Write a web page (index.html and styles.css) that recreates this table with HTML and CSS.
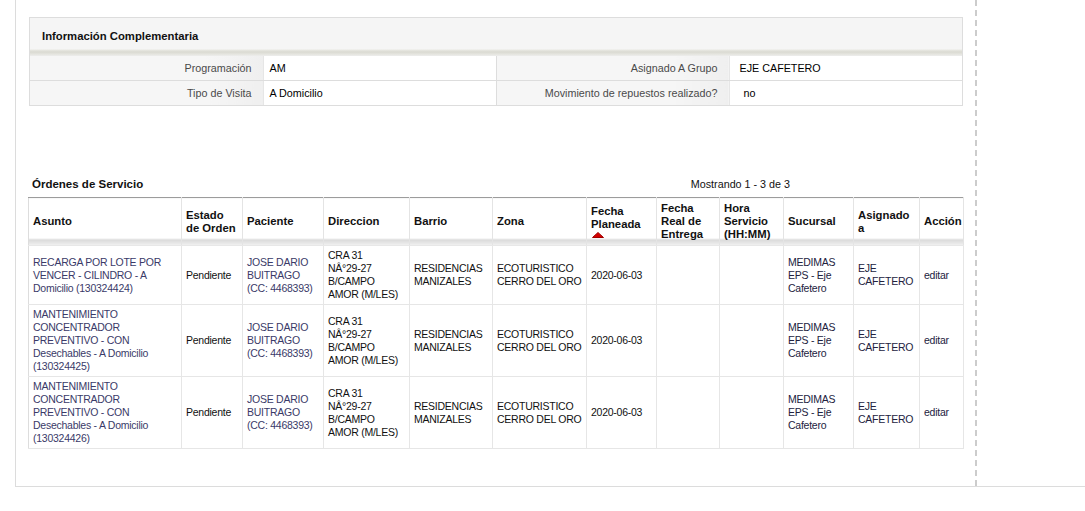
FILE: index.html
```html
<!DOCTYPE html>
<html lang="es">
<head>
<meta charset="utf-8">
<title>Información Complementaria</title>
<link rel="stylesheet" href="styles.css">
</head>
<body>
<div class="page">
  <div class="main">
    <div class="panel">
      <div class="panel-head">Información Complementaria</div>
      <table class="info">
        <colgroup><col><col><col><col></colgroup>
        <tr>
          <td class="lbl">Programación</td>
          <td class="val">AM</td>
          <td class="lbl">Asignado A Grupo</td>
          <td class="val v2">EJE CAFETERO</td>
        </tr>
        <tr>
          <td class="lbl">Tipo de Visita</td>
          <td class="val">A Domicilio</td>
          <td class="lbl">Movimiento de repuestos realizado?</td>
          <td class="val v2 v3">no</td>
        </tr>
      </table>
    </div>

    <div class="orders">
      <div class="orders-head">
        <span class="orders-title">Órdenes de Servicio</span>
        <span class="count">Mostrando 1 - 3 de 3</span>
      </div>
      <table class="grid">
        <colgroup>
          <col class="c-asunto"><col class="c-estado"><col class="c-paciente"><col class="c-dir">
          <col class="c-barrio"><col class="c-zona"><col class="c-fp"><col class="c-fr">
          <col class="c-hora"><col class="c-suc"><col class="c-asig"><col class="c-acc">
        </colgroup>
        <thead>
          <tr>
            <th>Asunto</th>
            <th>Estado de Orden</th>
            <th>Paciente</th>
            <th>Direccion</th>
            <th>Barrio</th>
            <th>Zona</th>
            <th class="sorted">Fecha Planeada<svg class="sort-arrow" width="12" height="6" viewBox="0 0 12 6"><polygon points="0.5,5.5 6,0.5 11.5,5.5" fill="#d40000" stroke="#a00000" stroke-width="1"/></svg></th>
            <th>Fecha Real de Entrega</th>
            <th>Hora Servicio (HH:MM)</th>
            <th>Sucursal</th>
            <th>Asignado a</th>
            <th>Acción</th>
          </tr>
        </thead>
        <tbody>
          <tr>
            <td class="lnk">RECARGA POR LOTE POR VENCER - CILINDRO - A Domicilio (130324424)</td>
            <td>Pendiente</td>
            <td class="lnk">JOSE DARIO BUITRAGO (CC: 4468393)</td>
            <td>CRA 31 <span class="nw">NÂ°29-27</span> B/CAMPO AMOR (M/LES)</td>
            <td>RESIDENCIAS MANIZALES</td>
            <td>ECOTURISTICO CERRO DEL ORO</td>
            <td>2020-06-03</td>
            <td></td>
            <td></td>
            <td class="dk">MEDIMAS EPS - Eje Cafetero</td>
            <td class="dk">EJE CAFETERO</td>
            <td class="dk">editar</td>
          </tr>
          <tr>
            <td class="lnk">MANTENIMIENTO CONCENTRADOR PREVENTIVO - CON Desechables - A Domicilio (130324425)</td>
            <td>Pendiente</td>
            <td class="lnk">JOSE DARIO BUITRAGO (CC: 4468393)</td>
            <td>CRA 31 <span class="nw">NÂ°29-27</span> B/CAMPO AMOR (M/LES)</td>
            <td>RESIDENCIAS MANIZALES</td>
            <td>ECOTURISTICO CERRO DEL ORO</td>
            <td>2020-06-03</td>
            <td></td>
            <td></td>
            <td class="dk">MEDIMAS EPS - Eje Cafetero</td>
            <td class="dk">EJE CAFETERO</td>
            <td class="dk">editar</td>
          </tr>
          <tr>
            <td class="lnk">MANTENIMIENTO CONCENTRADOR PREVENTIVO - CON Desechables - A Domicilio (130324426)</td>
            <td>Pendiente</td>
            <td class="lnk">JOSE DARIO BUITRAGO (CC: 4468393)</td>
            <td>CRA 31 <span class="nw">NÂ°29-27</span> B/CAMPO AMOR (M/LES)</td>
            <td>RESIDENCIAS MANIZALES</td>
            <td>ECOTURISTICO CERRO DEL ORO</td>
            <td>2020-06-03</td>
            <td></td>
            <td></td>
            <td class="dk">MEDIMAS EPS - Eje Cafetero</td>
            <td class="dk">EJE CAFETERO</td>
            <td class="dk">editar</td>
          </tr>
        </tbody>
      </table>
    </div>
  </div>
</div>
</body>
</html>
```

FILE: styles.css
```css
html, body {
  margin: 0;
  padding: 0;
  background: #fff;
}

body {
  font-family: "Liberation Sans", Arial, sans-serif;
  font-size: 10.75px;
  color: #000;
}

.page {
  display: flex;
  margin-left: 15px;
  height: 486px;
  border-left: 1px solid #dcdcdc;
  border-bottom: 1px solid #dcdcdc;
}

.main {
  box-sizing: border-box;
  width: 961px;
  height: 100%;
  padding: 17px 0 0 12px;
  border-right: 2px dashed #cccccc;
}

/* ---------- Información Complementaria ---------- */
.panel {
  box-sizing: border-box;
  width: 934px;
  margin-left: 1px;
  border: 1px solid #dddddd;
}

.panel-head {
  height: 38px;
  line-height: 37px;
  padding-left: 12px;
  font-size: 11.3px;
  font-weight: bold;
  color: #111;
  background: linear-gradient(to bottom, #f5f5f5 0, #f5f5f5 31px, #e8e8e2 32px, #dadad2 34px, #e4e4de 36px, #ededed 38px);
}

.info {
  width: 100%;
  border-collapse: collapse;
  table-layout: fixed;
}

.info td {
  height: 24px;
  padding: 0;
  border-bottom: 1px solid #dddddd;
  vertical-align: middle;
}

.info tr:last-child td {
  border-bottom: 0;
}

.info .lbl {
  text-align: right;
  padding-right: 11px;
  color: #4a4a4a;
  border-right: 1px solid #e6e6e6;
  background: linear-gradient(to right, #f6f6f6 0, #f6f6f6 75%, #efefef 100%);
}

.info .val {
  padding-left: 6px;
  color: #000;
  background: #fff;
  border-right: 1px solid #dddddd;
}

.info .v2 {
  padding-left: 10px;
  border-right: 0;
}

.info .v3 {
  padding-left: 14px;
}

/* ---------- Órdenes de Servicio ---------- */
.orders {
  width: 935px;
  margin-top: 72px;
}

.orders-head {
  display: flex;
  justify-content: space-between;
  align-items: center;
  height: 13px;
  line-height: 13px;
  padding: 0 173px 6px 4px;
}

.orders-title {
  font-size: 11.5px;
  font-weight: bold;
  color: #111;
}

.count {
  color: #111;
}

.grid {
  width: 935px;
  table-layout: fixed;
  border-collapse: collapse;
  border: 1px solid #dddddd;
  border-top: 1px solid #9c9c9c;
}

.c-asunto { width: 153px; }
.c-estado { width: 61px; }
.c-paciente { width: 81px; }
.c-dir { width: 86px; }
.c-barrio { width: 83px; }
.c-zona { width: 94px; }
.c-fp { width: 70px; }
.c-fr { width: 63px; }
.c-hora { width: 64px; }
.c-suc { width: 70px; }
.c-asig { width: 66px; }
.c-acc { width: 44px; }

.grid th {
  height: 39px;
  padding: 4px 3px 4px 4px;
  text-align: left;
  vertical-align: middle;
  font-size: 11.3px;
  font-weight: bold;
  line-height: 13px;
  color: #111;
  border-right: 1px solid #e4e4e4;
  border-bottom: 1px solid #e8e8e8;
  background: linear-gradient(to bottom, #ffffff 0, #ffffff calc(100% - 7px), #d9d9d9 calc(100% - 6px), #e9e9e9 calc(100% - 2px), #f3f3f3 100%);
}

.sort-arrow {
  display: block;
  margin: 1px 0 0 1px;
}

.grid td {
  padding: 3px 3px 3px 4px;
  font-size: 10.5px;
  letter-spacing: -0.25px;
  line-height: 13px;
  vertical-align: middle;
  color: #111;
  border-right: 1px solid #e6e6e6;
  border-bottom: 1px solid #e6e6e6;
}

.grid td .nw {
  white-space: nowrap;
}

.grid td.lnk {
  color: #3a3a68;
}

.grid td.dk {
  color: #22223e;
}
```
